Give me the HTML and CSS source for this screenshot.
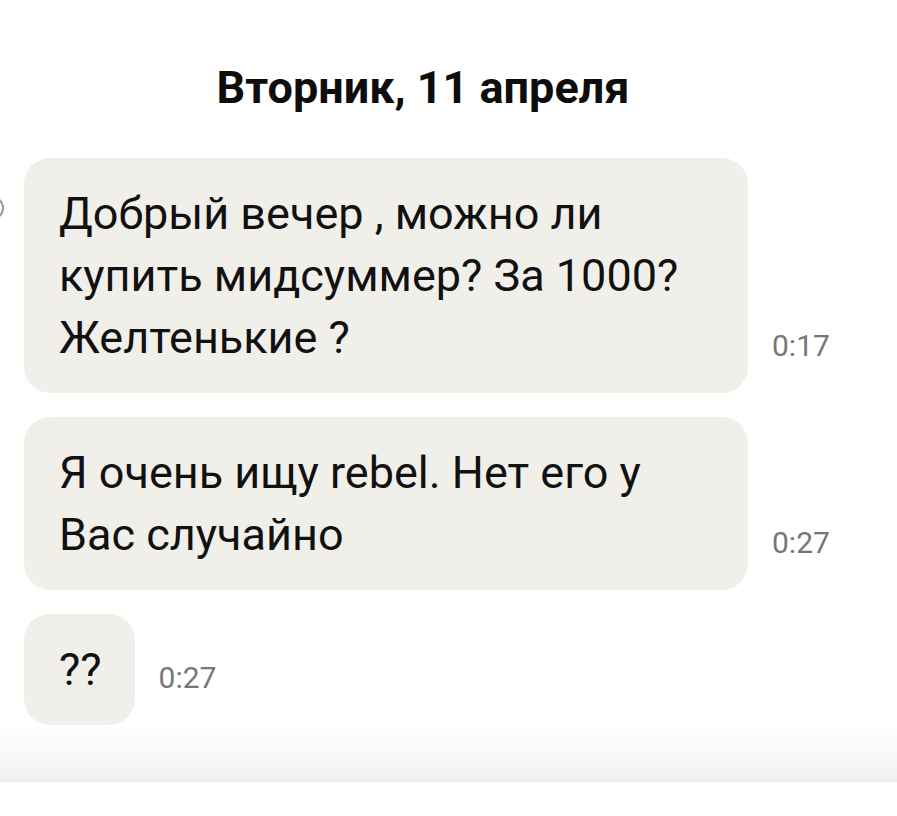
FILE: index.html
```html
<!DOCTYPE html>
<html lang="ru">
<head>
<meta charset="utf-8">
<title>Чат</title>
<link rel="stylesheet" href="styles.css">
</head>
<body>
<div class="chat">
  <div class="date">Вторник, 11 апреля</div>
  <div class="messages">
    <div class="row">
      <span class="edge-dot"></span>
      <div class="bubble">Добрый вечер , можно ли купить мидсуммер? За 1000? Желтенькие ?</div>
      <div class="time">0:17</div>
    </div>
    <div class="row">
      <div class="bubble">Я очень ищу rebel. Нет его у Вас случайно</div>
      <div class="time">0:27</div>
    </div>
    <div class="row">
      <div class="bubble">??</div>
      <div class="time">0:27</div>
    </div>
  </div>
  <div class="shade"></div>
</div>
</body>
</html>
```
FILE: styles.css
```css
html, body {
  margin: 0;
  padding: 0;
  background: #ffffff;
}
body {
  font-family: Roboto, "Noto Sans", sans-serif;
  color: #111111;
  width: 897px;
  height: 816px;
  overflow: hidden;
}
.chat {
  display: flex;
  flex-direction: column;
}
.date {
  padding-top: 61px;
  padding-right: 51px;
  text-align: center;
  font-size: 45px;
  font-weight: 700;
  line-height: 54px;
  color: #0d0d0d;
}
.messages {
  display: flex;
  flex-direction: column;
  gap: 24px;
  padding: 43px 0 0 24px;
}
.row {
  position: relative;
  display: flex;
  align-items: flex-end;
  gap: 24px;
}
.edge-dot {
  position: absolute;
  left: -44px;
  top: 38px;
  width: 20px;
  height: 20px;
  border-radius: 50%;
  border: 2px solid #9a9a9a;
}
.bubble {
  background: #f1efea;
  border-radius: 26px;
  padding: 25px 33px 24px 35px;
  max-width: 656px;
  font-size: 45px;
  line-height: 62px;
  letter-spacing: 0;
  color: #111111;
}
.time {
  font-size: 30px;
  line-height: 30px;
  color: #777777;
  margin-bottom: 32px;
}
.shade {
  height: 57px;
  background: linear-gradient(to bottom, #ffffff 0%, #f8f8f8 50%, #efefef 100%);
}
```
